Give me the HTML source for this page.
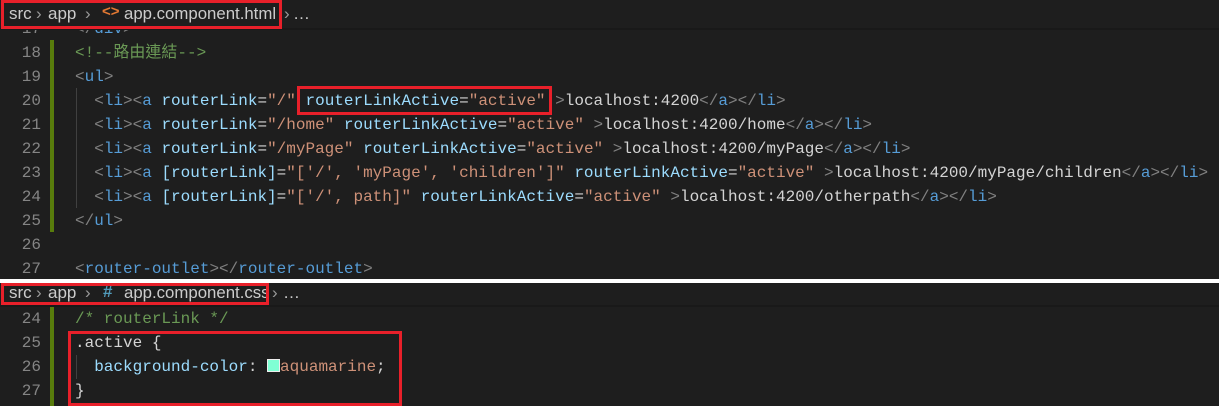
<!DOCTYPE html>
<html><head><meta charset="utf-8"><style>
body{margin:0;width:1219px;height:406px;background:#1e1e1e;overflow:hidden;position:relative;font-family:"Liberation Mono","Noto Sans CJK TC",monospace;font-size:16px}
.bc{position:absolute;font-family:"Liberation Sans",sans-serif;font-size:17px;color:#cccccc;white-space:pre}
.ln{position:absolute;left:0;width:41px;text-align:right;color:#858585;line-height:24px;height:24px}
.cd{position:absolute;left:75px;white-space:pre;color:#d4d4d4;line-height:24px;height:24px}
.b{color:#808080}.t{color:#569cd6}.a{color:#9cdcfe}.s{color:#ce9178}.c{color:#6a9955}.p{color:#d7ba7d}
.g{position:absolute;left:50px;width:4px;background:#587c0c}
.box{position:absolute;border:3px solid #e8202a;box-sizing:border-box}
.ig{position:absolute;width:1px;background:#404040}
.sep{color:#999}
</style></head><body>
<div class="ln" style="top:17px">17</div><div class="cd" style="top:17px"><span class="b">&lt;/</span><span class="t">div</span><span class="b">&gt;</span></div>
<div style="position:absolute;left:0;top:0;width:1219px;height:28px;background:#1e1e1e"></div>
<div style="position:absolute;left:0;top:28px;width:1219px;height:2px;background:#191919"></div>
<div class="bc" style="top:4px;left:9px">src</div><div class="bc sep" style="top:4px;left:36px">›</div>
<div class="bc" style="top:4px;left:48px">app</div><div class="bc sep" style="top:4px;left:85px">›</div>
<div class="bc" style="top:3px;left:102px;color:#e37933;font-size:15px;font-weight:bold">&lt;&gt;</div>
<div class="bc" style="top:4px;left:124px;font-size:16.8px">app.component.html</div>
<div class="bc sep" style="top:4px;left:284px">›</div><div class="bc" style="top:4px;left:293px">…</div>
<div class="box" style="left:1px;top:0;width:281px;height:29px"></div>
<div class="g" style="top:40px;height:192px"></div>
<div class="ig" style="left:76px;top:88px;height:120px"></div>
<div class="ln" style="top:41px">18</div><div class="cd" style="top:41px"><span class="c">&lt;!--路由連結--&gt;</span></div>
<div class="ln" style="top:65px">19</div><div class="cd" style="top:65px"><span class="b">&lt;</span><span class="t">ul</span><span class="b">&gt;</span></div>
<div class="ln" style="top:89px">20</div><div class="cd" style="top:89px">  <span class="b">&lt;</span><span class="t">li</span><span class="b">&gt;&lt;</span><span class="t">a</span> <span class="a">routerLink</span>=<span class="s">"/"</span> <span class="a">routerLinkActive</span>=<span class="s">"active"</span> <span class="b">&gt;</span>localhost:4200<span class="b">&lt;/</span><span class="t">a</span><span class="b">&gt;&lt;/</span><span class="t">li</span><span class="b">&gt;</span></div>
<div class="ln" style="top:113px">21</div><div class="cd" style="top:113px">  <span class="b">&lt;</span><span class="t">li</span><span class="b">&gt;&lt;</span><span class="t">a</span> <span class="a">routerLink</span>=<span class="s">"/home"</span> <span class="a">routerLinkActive</span>=<span class="s">"active"</span> <span class="b">&gt;</span>localhost:4200/home<span class="b">&lt;/</span><span class="t">a</span><span class="b">&gt;&lt;/</span><span class="t">li</span><span class="b">&gt;</span></div>
<div class="ln" style="top:137px">22</div><div class="cd" style="top:137px">  <span class="b">&lt;</span><span class="t">li</span><span class="b">&gt;&lt;</span><span class="t">a</span> <span class="a">routerLink</span>=<span class="s">"/myPage"</span> <span class="a">routerLinkActive</span>=<span class="s">"active"</span> <span class="b">&gt;</span>localhost:4200/myPage<span class="b">&lt;/</span><span class="t">a</span><span class="b">&gt;&lt;/</span><span class="t">li</span><span class="b">&gt;</span></div>
<div class="ln" style="top:161px">23</div><div class="cd" style="top:161px">  <span class="b">&lt;</span><span class="t">li</span><span class="b">&gt;&lt;</span><span class="t">a</span> <span class="a">[routerLink]</span>=<span class="s">"['/', 'myPage', 'children']"</span> <span class="a">routerLinkActive</span>=<span class="s">"active"</span> <span class="b">&gt;</span>localhost:4200/myPage/children<span class="b">&lt;/</span><span class="t">a</span><span class="b">&gt;&lt;/</span><span class="t">li</span><span class="b">&gt;</span></div>
<div class="ln" style="top:185px">24</div><div class="cd" style="top:185px">  <span class="b">&lt;</span><span class="t">li</span><span class="b">&gt;&lt;</span><span class="t">a</span> <span class="a">[routerLink]</span>=<span class="s">"['/', path]"</span> <span class="a">routerLinkActive</span>=<span class="s">"active"</span> <span class="b">&gt;</span>localhost:4200/otherpath<span class="b">&lt;/</span><span class="t">a</span><span class="b">&gt;&lt;/</span><span class="t">li</span><span class="b">&gt;</span></div>
<div class="ln" style="top:209px">25</div><div class="cd" style="top:209px"><span class="b">&lt;/</span><span class="t">ul</span><span class="b">&gt;</span></div>
<div class="ln" style="top:233px">26</div>
<div class="ln" style="top:257px">27</div><div class="cd" style="top:257px"><span class="b">&lt;</span><span class="t">router-outlet</span><span class="b">&gt;&lt;/</span><span class="t">router-outlet</span><span class="b">&gt;</span></div>
<div class="box" style="left:297px;top:86px;width:255px;height:29px"></div>
<div style="position:absolute;left:0;top:279px;width:1219px;height:4px;background:#fff"></div>
<div style="position:absolute;left:0;top:305px;width:1219px;height:2px;background:#191919"></div>
<div class="bc" style="top:283px;left:9px">src</div><div class="bc sep" style="top:283px;left:36px">›</div>
<div class="bc" style="top:283px;left:48px">app</div><div class="bc sep" style="top:283px;left:85px">›</div>
<div class="bc" style="top:282px;left:103px;color:#519aba;font-weight:bold">#</div>
<div class="bc" style="top:283px;left:124px;font-size:16.8px">app.component.css</div>
<div class="bc sep" style="top:283px;left:272px">›</div><div class="bc" style="top:283px;left:283px">…</div>
<div class="box" style="left:1px;top:283px;width:268px;height:22px"></div>
<div class="g" style="top:307px;height:99px"></div>
<div class="ln" style="top:307px">24</div><div class="cd" style="top:307px"><span class="c">/* routerLink */</span></div>
<div class="ln" style="top:331px">25</div><div class="cd" style="top:331px">.active {</div>
<div class="ln" style="top:355px">26</div><div class="cd" style="top:355px">  <span class="a">background-color</span>: <span style="display:inline-block;width:13px;height:13px;background:#7fffd4;border:1px solid #eee;vertical-align:-1px;box-sizing:border-box"></span><span class="s">aquamarine</span>;</div>
<div class="ln" style="top:379px">27</div><div class="cd" style="top:379px">}</div>
<div class="ig" style="left:76px;top:355px;height:24px"></div>
<div class="box" style="left:68px;top:331px;width:334px;height:75px"></div>
</body></html>
